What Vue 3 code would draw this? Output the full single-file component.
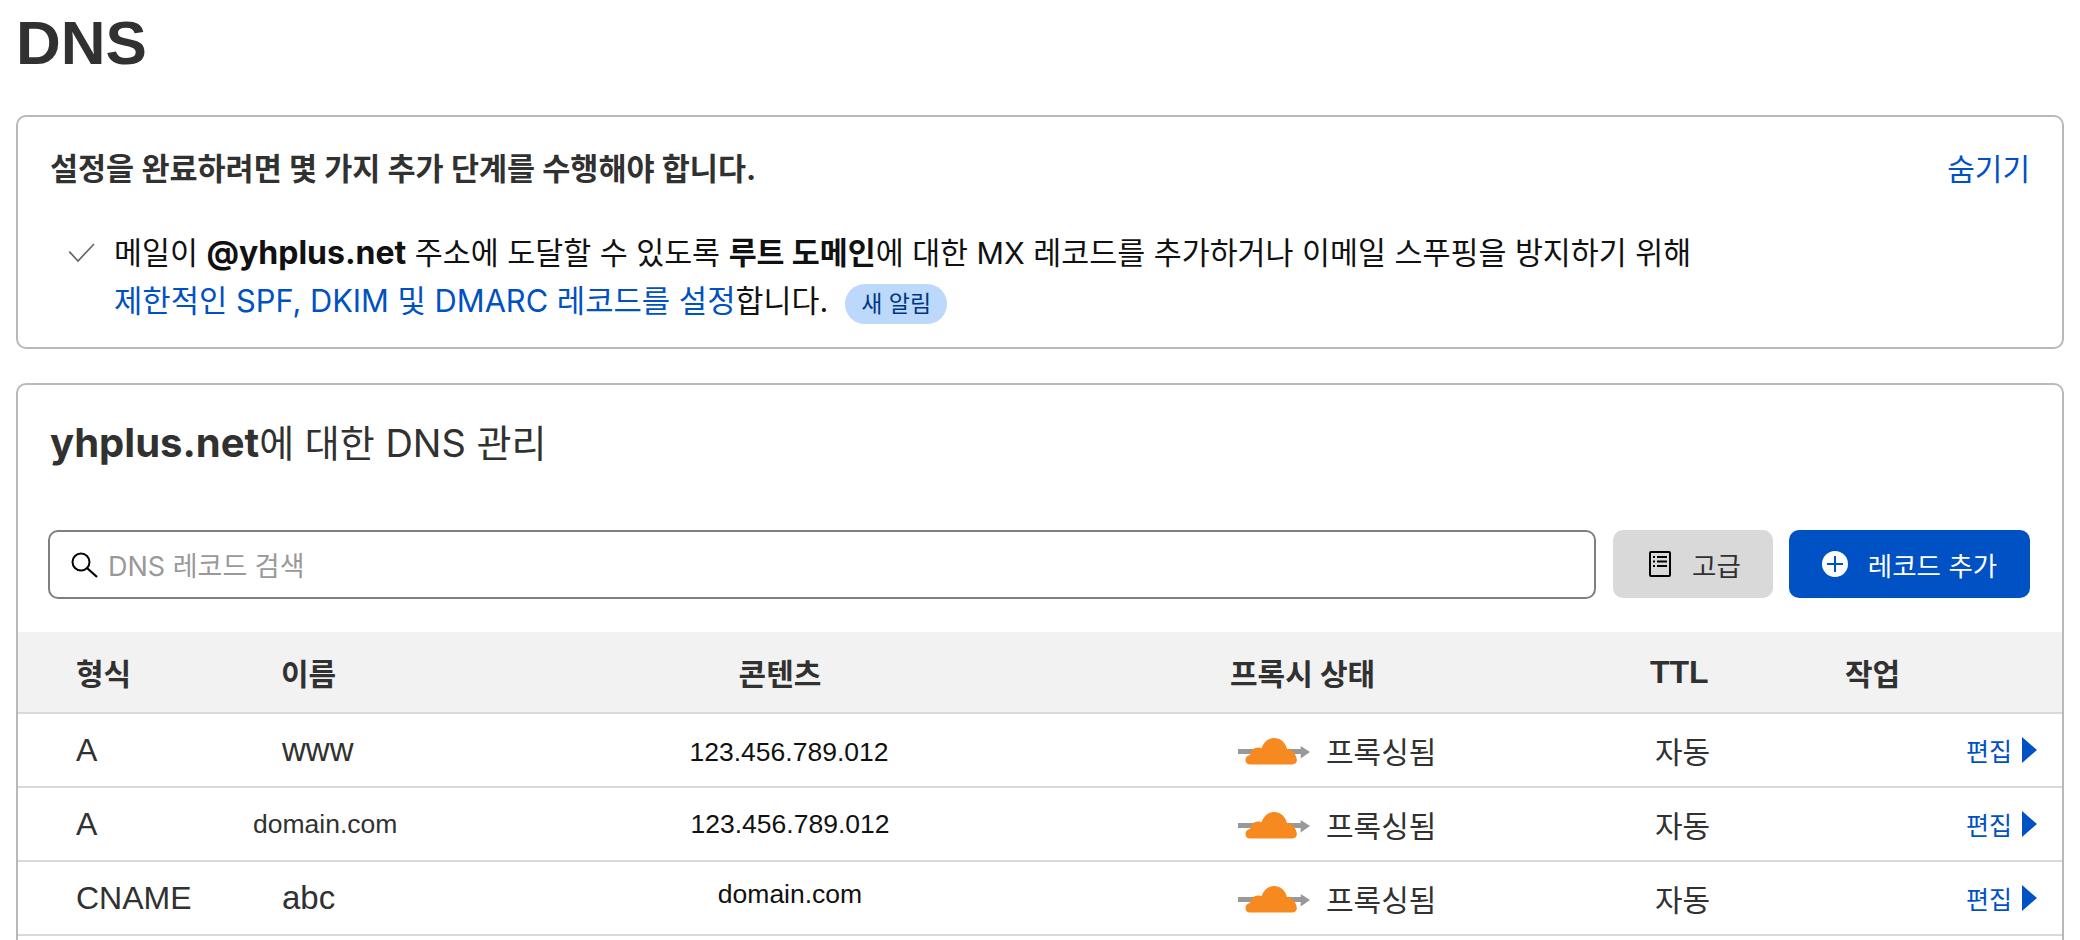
<script setup>
const rows = [
  { type: 'A', name: 'www', nameClass: 'short', content: '123.456.789.012', contentClass: 'low' },
  { type: 'A', name: 'domain.com', nameClass: 'long', content: '123.456.789.012', contentClass: '' },
  { type: 'CNAME', name: 'abc', nameClass: 'short', content: 'domain.com', contentClass: 'high' },
]
</script>

<template>
  <main class="page">
    <h1>DNS</h1>

    <section class="card notice">
      <div class="notice-head">
        <strong>설정을 완료하려면 몇 가지 추가 단계를 수행해야 합니다.</strong>
        <a class="link hide">숨기기</a>
      </div>
      <div class="notice-item">
        <svg class="check" width="28" height="20" viewBox="0 0 28 20">
          <path d="M1.300 8.700L10 18 26 1" fill="none" stroke="#666" stroke-width="1.700" />
        </svg>
        <p>
          메일이 <b class="addr">@yhplus.net</b> 주소에 도달할 수 있도록 <b>루트 도메인</b>에 대한 MX 레코드를 추가하거나 이메일 스푸핑을 방지하기 위해<br />
          <a class="link setup">제한적인 SPF, DKIM 및 DMARC 레코드를 설정</a>합니다.<span class="badge">새 알림</span>
        </p>
      </div>
    </section>

    <section class="card manage">
      <h2><b>yhplus.net</b>에 대한 DNS 관리</h2>

      <div class="toolbar">
        <div class="search">
          <svg width="28" height="28" viewBox="0 0 28 28">
            <circle cx="11" cy="11" r="8.5" fill="none" stroke="#000" stroke-width="2" />
            <path d="M17 17l10 9" fill="none" stroke="#000" stroke-width="2.2" />
          </svg>
          <span>DNS 레코드 검색</span>
        </div>
        <button class="btn grey">
          <svg width="22" height="26" viewBox="0 0 22 26">
            <rect x="1" y="1" width="20" height="24" rx="1" fill="none" stroke="#000" stroke-width="2" />
            <path d="M4 6h2M8 6h10M4 10.500h2M8 10.500h10M4 15h2M8 15h10" stroke="#000" stroke-width="2" />
          </svg>
          <span>고급</span>
        </button>
        <button class="btn blue">
          <svg width="26" height="26" viewBox="0 0 26 26">
            <circle cx="13" cy="13" r="13" fill="#fff" />
            <path d="M13 5v16M5 13h16" stroke="#0051c3" stroke-width="2" />
          </svg>
          <span>레코드 추가</span>
        </button>
      </div>

      <div class="table">
        <div class="row head">
          <div class="c-type">형식</div>
          <div class="c-name short">이름</div>
          <div class="c-content">콘텐츠</div>
          <div class="c-proxy">프록시 상태</div>
          <div class="c-ttl">TTL</div>
          <div class="c-act">작업</div>
        </div>
        <div class="row" v-for="(r, i) in rows" :key="i">
          <div class="c-type latin">{{ r.type }}</div>
          <div class="c-name latin" :class="r.nameClass">{{ r.name }}</div>
          <div class="c-content mono" :class="r.contentClass">{{ r.content }}</div>
          <div class="c-proxy proxied">
            <svg class="cloud" width="72" height="27" viewBox="0 0 72 27">
              <path d="M0 11h62.700V8L72 14l-9.300 6.500V16H0z" fill="#999" />
              <path d="M12 26.500C9 26.500 7.500 24.500 7.500 22 7.500 19 9.500 17.500 12 17 13 12.500 16 9.500 20 9.500 21.500 9.500 22.500 9.800 23.500 10.300 25.500 4.500 29.500 0 36 0 42.500 0 47.500 4.500 49 11 54 11 57.500 15 58.700 21 59.500 24.500 57 26.500 54 26.500z" fill="#f6891f" />
            </svg>
            <span>프록싱됨</span>
          </div>
          <div class="c-ttl auto">자동</div>
          <div class="c-act edit">
            <a class="link">편집</a>
            <svg width="15" height="26" viewBox="0 0 15 26"><path d="M0 0l15 13L0 26z" fill="#0051c3" /></svg>
          </div>
        </div>
        <div class="row"></div>
      </div>
    </section>
  </main>
</template>

<style scoped>
.page {
  padding: 0 16px;
  font-family: Inter, "Noto Sans CJK KR", sans-serif;
  color: #313131;
  font-size: 30px;
}
h1 {
  margin: 0 0 29px;
  font-size: 62px;
  line-height: 86px;
  font-weight: 700;
  font-family: "Liberation Sans", sans-serif;
}
.card {
  border: 2px solid #b9b9b9;
  border-radius: 10px;
  box-sizing: border-box;
}
.notice {
  height: 234px;
  padding: 30px 32px 0;
}
.notice-head {
  display: flex;
  justify-content: space-between;
  align-items: center;
  height: 40px;
  font-size: 30.500px;
}
.notice-head strong {
  font-weight: 700;
}
.hide {
  font-size: 30px;
}
.link {
  color: #0051c3;
}
.notice-item {
  display: flex;
  margin-top: 42px;
  padding-left: 18px;
  color: #111;
  font-size: 30.400px;
}
.check {
  margin: 14px 18px 0 0;
  flex: none;
}
.notice-item p {
  margin: 0;
  line-height: 48px;
}
.addr {
  font-size: 32px;
}
.setup {
  font-size: 30.800px;
}
.badge {
  display: inline-block;
  margin-left: 17px;
  padding: 0 16px;
  height: 40px;
  line-height: 40px;
  border-radius: 20px;
  background: #bcd9fb;
  color: #003681;
  font-size: 23px;
  vertical-align: 0;
}
.manage {
  margin-top: 34px;
  padding-top: 30px;
  height: 700px;
}
h2 {
  margin: 0 0 0 32px;
  font-size: 38px;
  font-weight: 400;
  line-height: 56px;
}
h2 b {
  font-size: 40px;
}
.toolbar {
  display: flex;
  align-items: flex-start;
  margin: 59px 32px 33px 30px;
  height: 69px;
}
.search {
  flex: 1;
  display: flex;
  align-items: center;
  gap: 10px;
  height: 69px;
  box-sizing: border-box;
  padding-left: 20px;
  border: 2px solid #7f7f7f;
  border-radius: 10px;
  color: #999;
  font-size: 27px;
}
.btn {
  display: flex;
  align-items: center;
  justify-content: center;
  height: 68px;
  border: 0;
  border-radius: 10px;
  font-family: inherit;
  font-size: 26.500px;
}
.grey {
  width: 160px;
  margin-left: 17px;
  padding-left: 10px;
  gap: 21px;
  background: #d9d9d9;
  color: #313131;
}
.blue {
  width: 241px;
  margin-left: 16px;
  gap: 20px;
  background: #0051c3;
  color: #fff;
}
.row {
  display: grid;
  grid-template-columns: 212px 250px 620px 400px 300px 262px;
  height: 74px;
  align-items: center;
  border-bottom: 2px solid #d9d9d9;
  box-sizing: border-box;
}
.row.head {
  height: 82px;
  background: #f2f2f2;
  font-weight: 700;
  font-size: 30px;
}
.c-type {
  padding-left: 58px;
}
.short {
  padding-left: 51px;
}
.long {
  padding-left: 23px;
  font-size: 26.500px !important;
}
.latin {
  font-family: "Liberation Sans", sans-serif;
  font-size: 32px;
}
.c-name.latin {
  font-size: 33px;
  padding-left: 52px;
}
.c-name.long {
  padding-left: 23px;
}
.c-content {
  text-align: center;
}
.mono {
  font-family: "Liberation Sans", sans-serif;
  font-size: 26.500px;
  color: #111;
}
.low {
  margin-top: 4px;
  padding-right: 2px;
}
.high {
  margin-bottom: 7px;
}
.head .c-content {
  padding-right: 20px;
}
.head .c-proxy {
  padding-left: 130px;
}
.proxied {
  display: flex;
  align-items: center;
  gap: 16px;
  padding-left: 138px;
}
.cloud {
  margin-top: 3px;
}
.head .c-ttl {
  padding-left: 150px;
  font-family: "Liberation Sans", sans-serif;
  font-size: 32px;
}
.auto {
  padding-left: 155px;
}
.head .c-act {
  padding-left: 45px;
}
.edit {
  display: flex;
  align-items: center;
  justify-content: flex-end;
  gap: 10px;
  padding-right: 25px;
  font-size: 25px;
}
</style>

<style>
html, body {
  overflow: hidden;
  height: 940px;
  background: #fff;
}
</style>
